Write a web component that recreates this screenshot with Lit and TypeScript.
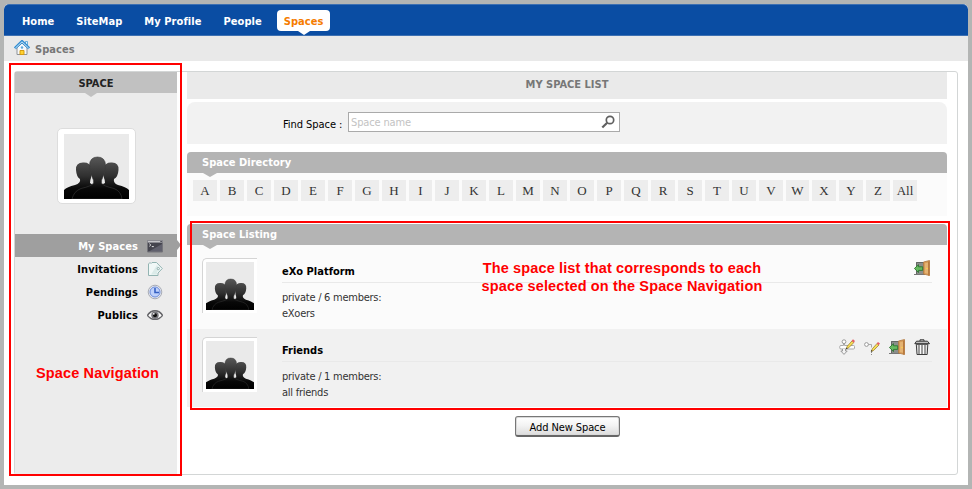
import { LitElement, html, css, svg } from "lit";
import { customElement, property } from "lit/decorators.js";

const homeIcon = html`<svg width="16" height="16" viewBox="0 0 16 16">
  <path d="M3 7.500V14.500H13V7.500L8 3Z" fill="#f6f8fa" stroke="#8d9298"/>
  <path d="M11.500 1.500h2v4l-2-1.500z" fill="#e8f5fd" stroke="#4b9fd5" stroke-width=".8"/>
  <path d="M.8 8.300 8 1.400l7.200 6.900" fill="none" stroke="#2f8bd0" stroke-width="2.800"/>
  <path d="M1.300 8.200 8 1.800l6.700 6.400" fill="none" stroke="#d5efff" stroke-width="1"/>
  <path d="M6 14.500v-4h4v4z" fill="#ffd22e" stroke="#d49b13"/>
  <circle cx="8" cy="7.500" r="1.200" fill="#5ba9dc"/>
</svg>`;

const consoleIcon = html`<svg width="16" height="16" viewBox="0 0 16 16">
  <path d="M0 2h16v3H0z" fill="#8a8a91"/><path d="M1 3h12v1H1z" fill="#c4c4c8"/><path d="M13.500 3h1.500v1h-1.500z" fill="#55555c"/>
  <path d="M1 5h14v9H1z" fill="#44444e"/><path d="M1 14 15 6v8z" fill="#60606d"/>
  <path d="M.5 4.500v9.500h15V4.500" fill="none" stroke="#74747a"/>
  <path d="m2.300 5.700 1.500 1.300-1.500 1.300M4.800 8.600h2" fill="none" stroke="#f3f3f3" stroke-width=".9"/>
</svg>`;

const tagIcon = html`<svg width="16" height="16" viewBox="0 0 16 16">
  <path d="M1.500 3 3 1.500l1 1L5 1.500h4.500l5.800 6-4.300 4.500v2.500H1.500z" fill="#f1f8f7" stroke="#93b4b2"/>
  <path d="M4 13.500 10 4l3 4-3 3v2.500z" fill="#dbebe9"/><circle cx="11.300" cy="7.600" r="1.100" fill="#fff" stroke="#7ca09e" stroke-width=".8"/>
</svg>`;

const clockIcon = html`<svg width="16" height="16" viewBox="0 0 16 16">
  <circle cx="8" cy="8" r="6.800" fill="#e4e6ec" stroke="#a8acb6"/>
  <circle cx="8" cy="8" r="5" fill="#bed1fb" stroke="#6b8cdb"/>
  <path d="M8 4v4.500h4" fill="none" stroke="#3560c2" stroke-width="1.600"/>
</svg>`;

const eyeIcon = html`<svg width="16" height="16" viewBox="0 0 16 16">
  <path d="M.5 8.500C3 5 5.500 4 8 4s5 1 7.500 4.500C13 11.500 10.500 12.500 8 12.500S3 11.500.5 8.500z" fill="#fbfbfb" stroke="#67676b" stroke-width="1.200"/>
  <path d="M.5 7.800C3 4.500 5.500 3.700 8 3.700s5 .8 7.500 4.100" fill="none" stroke="#66666a" stroke-width="1.200"/>
  <circle cx="8" cy="8.200" r="3.700" fill="#77777c"/><circle cx="8" cy="8.200" r="2" fill="#111"/><circle cx="6.800" cy="6.800" r=".9" fill="#f5f5f5"/>
</svg>`;

const doorIcon = html`<svg width="16" height="16" viewBox="0 0 16 16">
  <path d="M2 2h8v12H2z" fill="#8b8e8b"/><path d="M2.500 14V2.500H10" fill="none" stroke="#646864"/><path d="M0 14h11v1H0z" fill="#777"/>
  <path d="M9.500 2 15.500.500v15l-6-1.500z" fill="#d79b57" stroke="#b07a42" stroke-width=".8"/>
  <path d="M11 3.300 14.300 2.500V13.800L11 13z" fill="#e4b373"/><path d="M14 1.500h1.500v14h-1.500z" fill="#b97a3e"/><circle cx="13" cy="8.500" r=".8" fill="#ffd24a"/>
  <path d="M.4 8.500 4.500 4.700v2.100h4.200v3.600H4.500v2.100z" fill="#67ba60" stroke="#2c7630" stroke-width=".9"/>
</svg>`;

const pencil = svg`<path d="m7.300 9.800 1-2.600 4.800-5.400 1.800 1.700-5.200 5.300z" fill="#f7df55" stroke="#927529" stroke-width=".7"/>
  <path d="m12.600 1.800 1.400-1.500 2 1.700-1.400 1.700z" fill="#e66166"/><path d="m6.900 10.200.6-1.700 1.100 1.100z" fill="#333"/>`;

const editNodeIcon = html`<svg width="16" height="16" viewBox="0 0 16 16">
  <path d="M2 6.500h2.500V4.800h1V6.500h9q1 0 1 1v1.500q0 1-1 1H2q-1.300 0-1.300-1.200V7.700Q.7 6.500 2 6.500z" fill="#fdfdfd" stroke="#aaa"/>
  <circle cx="5" cy="2.700" r="1.900" fill="#fff" stroke="#999"/><path d="M3.500 10v2H1.800L5 15.400 8.200 12H6.500v-2" fill="#f4f4f4" stroke="#999"/>
  ${pencil}
</svg>`;

const editPathIcon = html`<svg width="16" height="16" viewBox="0 0 16 16">
  <path d="M4 5.500h3.500v3" fill="none" stroke="#aaa"/><circle cx="2.500" cy="5.500" r="1.900" fill="#fff" stroke="#999"/>
  <path d="M7.500 11v5" stroke="#8d8d8d" stroke-dasharray="1 1"/><g transform="translate(0 2.600)">${pencil}</g>
</svg>`;

const trashIcon = html`<svg width="16" height="16" viewBox="0 0 16 16">
  <path d="M6 2V.8h4V2" fill="none" stroke="#333"/>
  <path d="M2.500 2.200h11l2 2.500H.8z" fill="#bebebe" stroke="#333"/>
  <path d="M2.300 5.300h11.500l-.6 10.200H3z" fill="#e3e3e3" stroke="#3d3d3d"/>
  <path d="M5 6v9M8 6v9M11 6v9" stroke="#777" stroke-width="1.300"/><path d="M6.500 6v9M9.500 6v9" stroke="#fff" stroke-width=".8"/>
</svg>`;

const searchIcon = html`<svg width="14" height="14" viewBox="0 0 14 14">
  <circle cx="9" cy="5" r="3.700" fill="none" stroke="#606060" stroke-width="1.700"/><path d="M6.200 7.700 1.300 12.500" stroke="#606060" stroke-width="2.200"/>
</svg>`;

@customElement("people-picture")
class PeoplePicture extends LitElement {
  static styles = css`
    :host { display: block; background: #eaeaea; }
    svg { display: block; width: 100%; height: 100%; }
  `;
  render() {
    return html`<svg viewBox="0 0 65 65">
      <defs><linearGradient id="g" gradientUnits="userSpaceOnUse" x1="0" y1="23" x2="0" y2="65">
        <stop offset="0" stop-color="#585858"/><stop offset=".45" stop-color="#303030"/><stop offset=".75" stop-color="#080808"/><stop offset="1" stop-color="#000"/>
      </linearGradient></defs>
      <g fill="url(#g)">
        <path d="M0 65V56Q3 53 11 51Q17 49 16 45Q12.500 43 12 36Q11.500 28.500 19 28.500Q26 28 27 34V44Q26 46 26 49L29 51V65Z"/>
        <path d="M65 65V56Q62 53 54 51Q49 49 50 45Q54 43 54.500 36Q55 28.500 48 28.500Q41 28 40 34V44Q41 46 41 49L37 51V65Z"/>
        <path stroke="#3c3c3c" stroke-width=".6" d="M8 65Q10 57 17 54.500Q28 52 29.500 49Q30 46 28 43Q25.500 39 25.500 31Q26 23 33.500 23Q41 23 41.500 31Q41.500 39 39 43Q37 46 37.500 49Q39 52 50 54.500Q57 57 58 65Z"/>
      </g>
    </svg>`;
  }
}

@customElement("section-title")
class SectionTitle extends LitElement {
  @property() label = "";
  static styles = css`
    :host { display: block; position: relative; height: 21px; background: #b4b4b4; border-radius: 4px 4px 0 0; }
    .label { padding-left: 15px; color: #fff; font-weight: bold; font-size: 11px; line-height: 21px; letter-spacing: .02px; }
    .tip { position: absolute; left: 16px; top: 21px; border: solid transparent; border-width: 4px 7px 0; border-top-color: #b4b4b4; }
  `;
  render() {
    return html`<div class="label">${this.label}</div><div class="tip"></div>`;
  }
}

const tabs = ["Home", "SiteMap", "My Profile", "People", "Spaces"];
const letters = [..."ABCDEFGHIJKLMNOPQRSTUVWXYZ", "All"];
const menu = [
  { label: "My Spaces", icon: consoleIcon },
  { label: "Invitations", icon: tagIcon },
  { label: "Pendings", icon: clockIcon },
  { label: "Publics", icon: eyeIcon },
];
const spaces = [
  { name: "eXo Platform", meta: "private / 6 members:", about: "eXoers", actions: [doorIcon] },
  { name: "Friends", meta: "private / 1 members:", about: "all friends", actions: [editNodeIcon, editPathIcon, doorIcon, trashIcon] },
];

@customElement("app-root")
class AppRoot extends LitElement {
  static styles = css`
    * { box-sizing: border-box; }
    :host { display: block; position: relative; box-sizing: border-box; width: 972px; height: 489px; padding: 4px; background: #b3b5b4; overflow: hidden; font-family: "DejaVu Sans Condensed", "DejaVu Sans", sans-serif; font-stretch: condensed; font-size: 11px; color: #000; }
    svg { display: block; }
    .window { height: 481px; background: #fff; border-radius: 5px 5px 0 0; overflow: hidden; }
    .bar { display: flex; height: 32px; padding: 5px 0 0 11px; background: #0a4da3; border: solid #3d70b2; border-width: 1px 0; border-radius: 5px 5px 0 0; }
    .tab { position: relative; height: 21px; line-height: 23px; padding: 0 7px; margin-right: 8px; color: #fff; font-weight: bold; letter-spacing: .06px; }
    .tab.on { background: #fff; color: #f57c00; border-radius: 4px; }
    .tab.on::after { content: ""; position: absolute; left: 21px; top: 21px; border: solid transparent; border-width: 4px 6px 0; border-top-color: #fff; }
    .crumb { display: flex; align-items: center; gap: 5px; height: 25px; padding-left: 10px; background: #e9e9e9; color: #777; font-weight: bold; line-height: 22px; letter-spacing: .06px; }
    .crumb span { padding-top: 2px; }
    .crumb svg { margin-bottom: 1px; }
    .panel { display: flex; width: 944px; height: 404px; margin: 10px 0 0 10px; border: 1px solid #d3d6d6; border-radius: 3px; }
    .side { width: 162px; height: 402px; background: #ececec; }
    .side-title { position: relative; height: 21px; background: #c1c1c1; text-align: center; line-height: 23px; font-weight: bold; color: #222; }
    .side-title::after { content: ""; position: absolute; left: 70px; top: 21px; border: solid transparent; border-width: 4px 6px 0; border-top-color: #c1c1c1; }
    .avatar { width: 79px; height: 76px; margin: 35px 0 30px 42px; padding: 5px 6px; background: #fff; border: 1px solid #ddd; border-radius: 5px; }
    .avatar people-picture { width: 65px; height: 65px; }
    .item { position: relative; display: flex; justify-content: flex-end; align-items: center; gap: 9px; height: 23px; padding-right: 14px; font-weight: bold; line-height: 22px; letter-spacing: .08px; }
    .item span { padding-top: 2px; }
    .item.on { background: #9f9f9f; color: #fff; }
    .item.on::after { content: ""; position: absolute; left: 162px; top: 6px; border: solid transparent; border-width: 5px 0 5px 4px; border-left-color: #9f9f9f; }
    .main { width: 760px; margin-left: 10px; }
    .title { height: 27px; background: #eaeaea; color: #777; text-align: center; font-weight: bold; line-height: 25px; }
    .find { display: flex; height: 42px; margin: 3px 0 8px; padding: 10px 0 0 96px; background: #f2f2f2; border-radius: 8px 8px 0 0; }
    .find-label { width: 65px; line-height: 25px; white-space: nowrap; letter-spacing: -.05px; }
    .field { display: flex; justify-content: space-between; width: 272px; height: 20px; padding: 2px 4px 0 2px; border: 1px solid #aaa; background: #fff; color: #c3c3c3; line-height: 15px; letter-spacing: -.15px; }
    .letters { display: flex; gap: 3px; height: 43px; margin-bottom: 8px; padding: 7px 6px; background: #fbfbfb; }
    .letter { width: 24px; height: 21px; background: #ededed; color: #333; text-align: center; font: 13px/21px "Liberation Serif", serif; }
    .letter.slim { width: 23px; }
    .space { display: flex; height: 84px; padding: 13px 15px 0; background: #fbfbfb; }
    .space.alt { height: 78px; padding-top: 8px; background: #f1f1f1; }
    .thumb { width: 55px; height: 55px; padding: 3px; border: solid #d5d5d5; border-width: 1px 0 0 1px; border-radius: 5px 0 0 0; background: #fff; }
    .thumb people-picture { width: 48px; height: 48px; }
    .info { width: 650px; margin-left: 25px; }
    .head { display: flex; justify-content: space-between; height: 25px; padding: 2px 2px 0 0; border-bottom: 1px solid #e9e9e9; }
    .name { font-weight: bold; line-height: 23px; }
    .actions { display: flex; gap: 9px; }
    .meta { padding-top: 7px; color: #333; line-height: 16px; letter-spacing: -.25px; }
    .button { display: block; width: 105px; height: 21px; margin: 9px 0 0 328px; padding: 1px 0 0; border: 1px solid #777; border-bottom: 2px solid #666; border-radius: 3px; background: linear-gradient(#fff, #f4f4f4 45%, #dcdcdc); color: #000; font: inherit; line-height: 20px; letter-spacing: -.1px; box-shadow: inset 0 0 0 1px #d9d9d9; }
    .frame { position: absolute; border: 2px solid #f00; }
    .frame.nav { left: 9px; top: 63px; width: 173px; height: 413px; }
    .frame.list { left: 190px; top: 221px; width: 760px; height: 189px; }
    .note { position: absolute; color: #f00; font: bold 14.500px/18px "Liberation Sans", Arial, sans-serif; letter-spacing: .14px; text-align: center; white-space: nowrap; }
    .note.nav { left: 36px; top: 364px; }
    .note.list { left: 471px; top: 259px; width: 302px; }
  `;

  render() {
    return html`
      <div class="window">
        <div class="bar">${tabs.map((t) => html`<div class="tab ${t === "Spaces" ? "on" : ""}">${t}</div>`)}</div>
        <div class="crumb">${homeIcon}<span>Spaces</span></div>
        <div class="panel">
          <div class="side">
            <div class="side-title">SPACE</div>
            <div class="avatar"><people-picture></people-picture></div>
            ${menu.map((m, i) => html`<div class="item ${i ? "" : "on"}"><span>${m.label}</span>${m.icon}</div>`)}
          </div>
          <div class="main">
            <div class="title">MY SPACE LIST</div>
            <div class="find">
              <span class="find-label">Find Space :</span>
              <div class="field"><span>Space name</span>${searchIcon}</div>
            </div>
            <section-title label="Space Directory"></section-title>
            <div class="letters">${letters.map((l) => html`<div class="letter ${l === "I" || l === "W" ? "slim" : ""}">${l}</div>`)}</div>
            <section-title label="Space Listing"></section-title>
            ${spaces.map((s, i) => html`<div class="space ${i ? "alt" : ""}">
              <div class="thumb"><people-picture></people-picture></div>
              <div class="info">
                <div class="head"><span class="name">${s.name}</span><div class="actions">${s.actions}</div></div>
                <div class="meta"><div>${s.meta}</div><div>${s.about}</div></div>
              </div>
            </div>`)}
            <button class="button">Add New Space</button>
          </div>
        </div>
      </div>
      <div class="frame nav"></div>
      <div class="frame list"></div>
      <div class="note nav">Space Navigation</div>
      <div class="note list">The space list that corresponds to each<br>space selected on the Space Navigation</div>
    `;
  }
}
